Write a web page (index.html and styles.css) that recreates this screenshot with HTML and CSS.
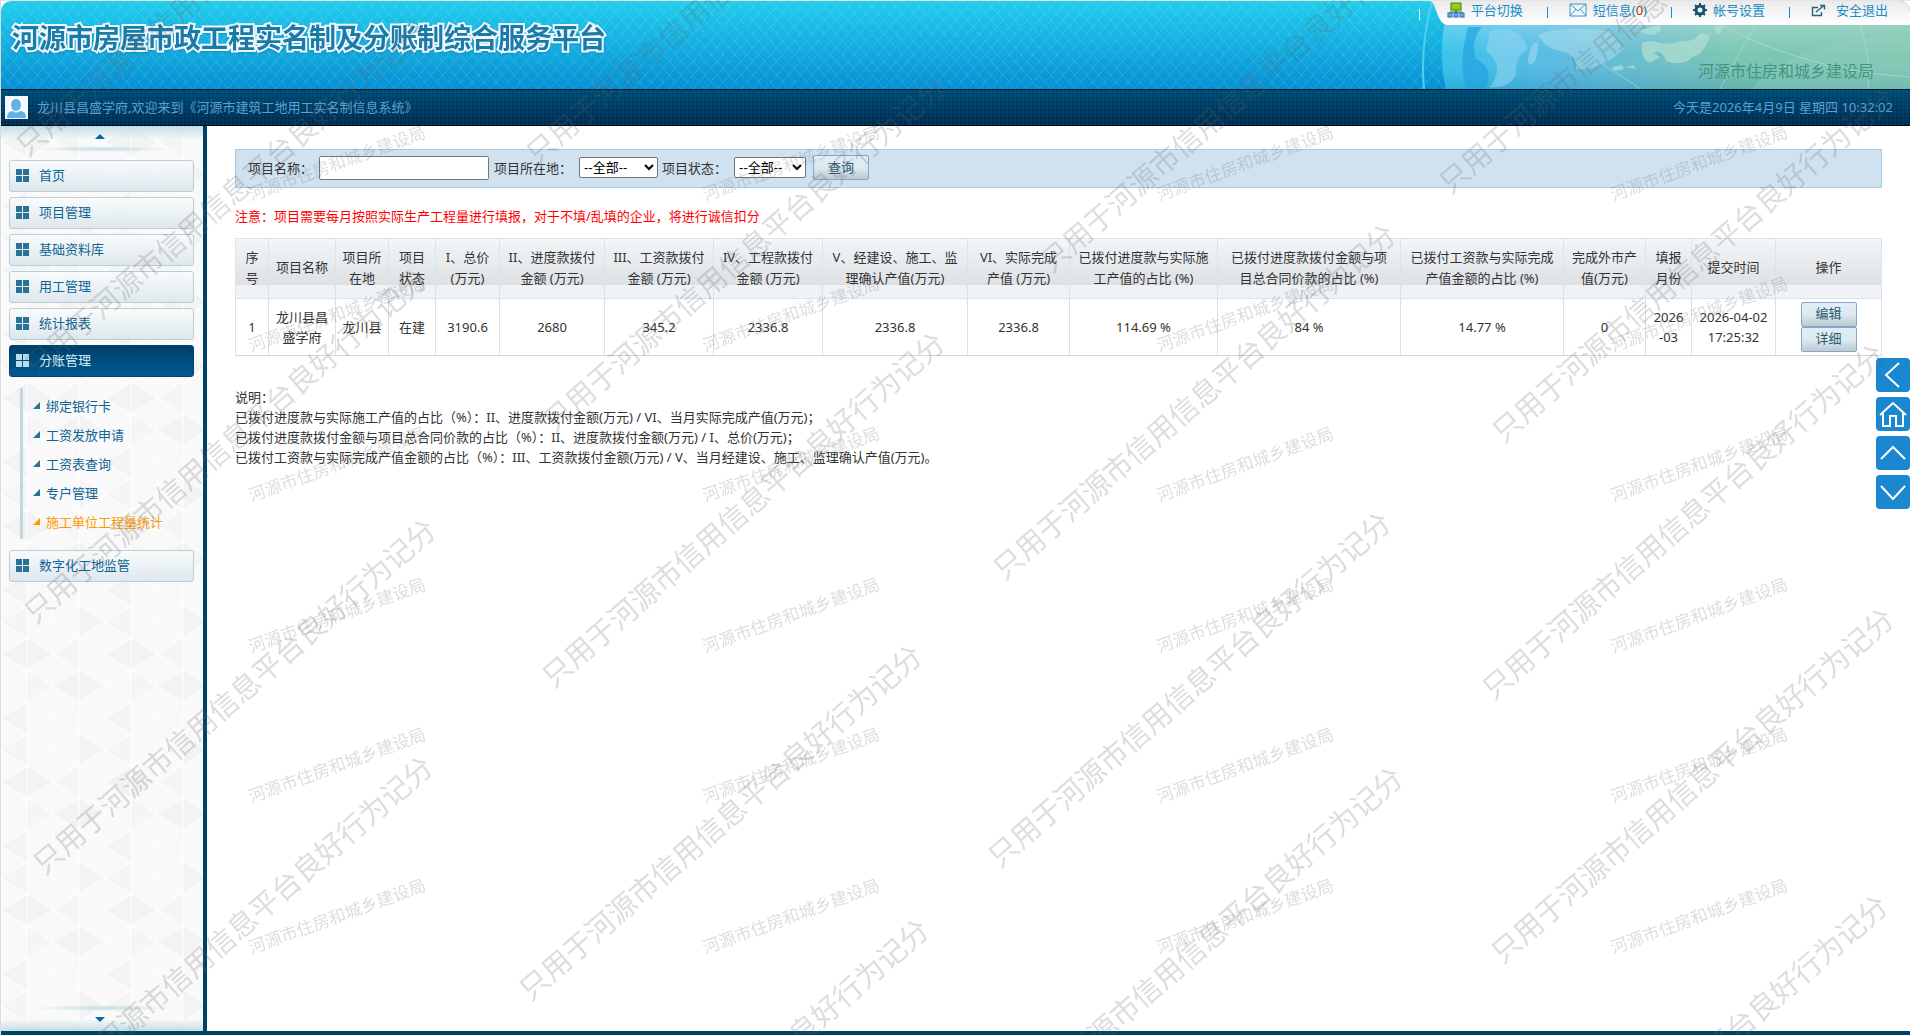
FILE: index.html
```html
<!DOCTYPE html>
<html lang="zh-CN">
<head>
    <meta charset="UTF-8">
    <meta name="viewport" content="width=device-width, initial-scale=1.0">
    <title>河源市房屋市政工程实名制及分账制综合服务平台</title>
    <link rel="stylesheet" href="styles.css">
</head>
<body>
    <header class="header">
        <svg class="globe" width="500" height="88" viewBox="0 0 500 88" aria-hidden="true">
            <defs>
                <linearGradient id="sea" x1="0" x2="1" y1="0" y2="0">
                    <stop offset="0" stop-color="#2fc0ea"/>
                    <stop offset="0.25" stop-color="#54b8e2"/>
                    <stop offset="0.45" stop-color="#66bcc8"/>
                    <stop offset="0.62" stop-color="#74c4b0"/>
                    <stop offset="1" stop-color="#76c2ac"/>
                </linearGradient>
                <linearGradient id="shine" x1="0" x2="0" y1="0" y2="1">
                    <stop offset="0.2" stop-color="#fff" stop-opacity="0.3"/>
                    <stop offset="0.6" stop-color="#fff" stop-opacity="0.05"/>
                    <stop offset="1" stop-color="#0060a0" stop-opacity="0.18"/>
                </linearGradient>
            </defs>
            <path d="M40 0Q26 44 36 88H500V0Z" fill="url(#sea)"/>
            <path d="M40 0Q26 44 36 88H500V0Z" fill="url(#shine)"/>
            <path d="M22 0Q10 46 14 88" fill="none" stroke="#4fd0f0" stroke-width="2"/>
            <path d="M58 26Q48 60 56 88H76Q84 66 66 58Q60 40 72 26Z" fill="#1a9fe0" opacity="0.6"/>
            <path d="M80 30Q110 22 118 48Q104 56 106 74Q98 88 80 86Q96 64 76 50Z" fill="#8fd4f0" opacity="0.6"/>
            <path d="M120 50Q122 40 128 42Q128 62 120 64Q116 62 120 50ZM128 34Q150 24 200 30L214 48Q190 70 166 68Q168 54 150 50Q136 48 128 34Z" fill="#b4e2f0" opacity="0.45"/>
            <path d="M226 30L250 24Q254 32 240 34ZM232 42Q240 38 250 42Q262 44 270 40Q284 42 290 32L300 34Q294 54 282 56Q274 66 256 60Q252 48 244 52L250 56L240 62Q230 58 232 42ZM202 66L212 64L214 68L204 70ZM216 66L224 64L226 68ZM304 26L316 24L308 34Z" fill="#b4e0d2" opacity="0.7"/>
            <path d="M340 88Q400 30 500 36V88Z" fill="#9fd8c4" opacity="0.25"/>
            <path d="M190 62Q220 80 230 88M345 24L310 88M310 24Q400 70 500 76M450 24Q462 56 458 88" fill="none" stroke="#c0e8e0" stroke-opacity="0.5"/>
        </svg>
        <h1 class="title">河源市房屋市政工程实名制及分账制综合服务平台</h1>
        <div class="header-right">
            <nav class="topnav">
                <a href="#">
                    <svg width="18" height="16" viewBox="0 0 18 16">
                        <rect x="4" y="1" width="10" height="7" fill="#8fcf1a" stroke="#4a7a10"/>
                        <path d="M9 8V11M3 12V10H15V12M9 10V12" fill="none" stroke="#456"/>
                        <rect x="1" y="11" width="4" height="4" fill="#6ab4ea" stroke="#2a6ea8"/>
                        <rect x="7" y="11" width="4" height="4" fill="#6ab4ea" stroke="#2a6ea8"/>
                        <rect x="13" y="11" width="4" height="4" fill="#6ab4ea" stroke="#2a6ea8"/>
                    </svg>
                    平台切换
                </a>
                <a href="#">
                    <svg width="18" height="14" viewBox="0 0 18 14">
                        <path d="M1 1H17V13H1ZM1 1L9 8L17 1M1 13L7 6M17 13L11 6" fill="#f4fafd" stroke="#3a96c8"/>
                    </svg>
                    <span>短信息(<b class="count">0</b>)</span>
                </a>
                <a href="#">
                    <svg class="gear" width="14" height="14" viewBox="0 0 14 14">
                        <circle cx="7" cy="7" r="4" fill="none" stroke="#16506e" stroke-width="3"/>
                        <path d="M7 0V3M7 11V14M0 7H3M11 7H14M2 2L4 4M10 10L12 12M2 12L4 10M10 4L12 2" stroke="#16506e" stroke-width="2"/>
                    </svg>
                    帐号设置
                </a>
                <a href="#">
                    <svg class="exit" width="15" height="13" viewBox="0 0 15 13">
                        <path d="M7 3.5H1.5V11.5H10.5V8M5 8L13 1.5M9 1.5H13.5V5.5" fill="none" stroke="#2a5f80" stroke-width="1.4"/>
                    </svg>
                    安全退出
                </a>
            </nav>
            <p class="bureau">河源市住房和城乡建设局</p>
        </div>
    </header>

    <div class="userbar">
        <svg class="avatar" width="23" height="23" viewBox="0 0 23 23">
            <rect width="23" height="23" fill="#f4f9fd"/>
            <ellipse cx="11" cy="9" rx="5" ry="6" fill="#62b0e6"/>
            <path d="M2 22Q2 15 8 15Q11 18 15 15Q21 15 21 22Z" fill="#62b0e6"/>
        </svg>
        <span>龙川县昌盛学府,欢迎来到《河源市建筑工地用工实名制信息系统》</span>
        <span class="clock">今天是2026年4月9日 星期四 10:32:02</span>
    </div>

    <div class="main">
        <aside class="sidebar">
            <div class="scroll scroll-up"><i></i></div>
            <ul class="menu">
                <li><a href="#"><i class="grid-icon"></i>首页</a></li>
                <li><a href="#"><i class="grid-icon"></i>项目管理</a></li>
                <li><a href="#"><i class="grid-icon"></i>基础资料库</a></li>
                <li><a href="#"><i class="grid-icon"></i>用工管理</a></li>
                <li><a href="#"><i class="grid-icon"></i>统计报表</a></li>
                <li>
                    <a href="#" class="active"><i class="grid-icon"></i>分账管理</a>
                    <ul class="submenu">
                        <li><a href="#">绑定银行卡</a></li>
                        <li><a href="#">工资发放申请</a></li>
                        <li><a href="#">工资表查询</a></li>
                        <li><a href="#">专户管理</a></li>
                        <li><a href="#" class="current">施工单位工程量统计</a></li>
                    </ul>
                </li>
                <li><a href="#"><i class="grid-icon"></i>数字化工地监管</a></li>
            </ul>
            <div class="scroll scroll-down"><i></i></div>
        </aside>

        <main class="content">
            <form class="search">
                <label for="xmmc">项目名称：</label>
                <input type="text" id="xmmc">
                <label for="szd">项目所在地：</label>
                <select id="szd" class="area">
                    <option>--全部--</option>
                </select>
                <label for="zt">项目状态：</label>
                <select id="zt">
                    <option>--全部--</option>
                </select>
                <button type="button" class="btn">查询</button>
            </form>

            <p class="notice">注意：项目需要每月按照实际生产工程量进行填报，对于不填/乱填的企业，将进行诚信扣分</p>

            <table class="list">
                <colgroup>
                    <col class="w33"><col class="w67"><col class="w53"><col class="w47"><col class="w64">
                    <col class="w105"><col class="w109"><col class="w109"><col class="w145"><col class="w102">
                    <col class="w148"><col class="w183"><col class="w163"><col class="w82"><col class="w46">
                    <col class="w84"><col class="w106">
                </colgroup>
                <thead>
                    <tr>
                        <th>序号</th>
                        <th>项目名称</th>
                        <th>项目所<br>在地</th>
                        <th>项目<br>状态</th>
                        <th>I、总价<br>(万元)</th>
                        <th>II、进度款拨付<br>金额 (万元)</th>
                        <th>III、工资款拨付<br>金额 (万元)</th>
                        <th>IV、工程款拨付<br>金额 (万元)</th>
                        <th>V、经建设、施工、监<br>理确认产值(万元)</th>
                        <th>VI、实际完成<br>产值 (万元)</th>
                        <th>已拨付进度款与实际施<br>工产值的占比 (%)</th>
                        <th>已拨付进度款拨付金额与项<br>目总合同价款的占比 (%)</th>
                        <th>已拨付工资款与实际完成<br>产值金额的占比 (%)</th>
                        <th>完成外市产<br>值(万元)</th>
                        <th>填报<br>月份</th>
                        <th>提交时间</th>
                        <th>操作</th>
                    </tr>
                </thead>
                <tbody>
                    <tr>
                        <td>1</td>
                        <td>龙川县昌<br>盛学府</td>
                        <td>龙川县</td>
                        <td>在建</td>
                        <td>3190.6</td>
                        <td>2680</td>
                        <td>345.2</td>
                        <td>2336.8</td>
                        <td>2336.8</td>
                        <td>2336.8</td>
                        <td>114.69 %</td>
                        <td>84 %</td>
                        <td>14.77 %</td>
                        <td>0</td>
                        <td>2026<br>-03</td>
                        <td>2026-04-02<br>17:25:32</td>
                        <td class="ops">
                            <button type="button" class="btn">编辑</button>
                            <button type="button" class="btn">详细</button>
                        </td>
                    </tr>
                </tbody>
            </table>

            <div class="remark">
                <p>说明：</p>
                <p>已拨付进度款与实际施工产值的占比（%）：II、进度款拨付金额(万元) / VI、当月实际完成产值(万元)；</p>
                <p>已拨付进度款拨付金额与项目总合同价款的占比（%）：II、进度款拨付金额(万元) / I、总价(万元)；</p>
                <p>已拨付工资款与实际完成产值金额的占比（%）：III、工资款拨付金额(万元) / V、当月经建设、施工、监理确认产值(万元)。</p>
            </div>
        </main>
    </div>

    <div class="float-tools">
        <button type="button" aria-label="后退">
            <svg width="34" height="34" viewBox="0 0 34 34"><path d="M23 5L10 17L23 29"/></svg>
        </button>
        <button type="button" aria-label="主页">
            <svg width="34" height="34" viewBox="0 0 34 34"><path d="M4 18L17 6L30 18M7 16V29H14V19H20V29H27V16"/></svg>
        </button>
        <button type="button" aria-label="顶部">
            <svg width="34" height="34" viewBox="0 0 34 34"><path d="M5 23L17 11L29 23"/></svg>
        </button>
        <button type="button" aria-label="底部">
            <svg width="34" height="34" viewBox="0 0 34 34"><path d="M5 11L17 24L29 11"/></svg>
        </button>
    </div>

    <!-- 水印 -->
    <svg class="watermark" id="watermark" aria-hidden="true"></svg>

    <script>
        const svg = document.getElementById('watermark');

        function addMark(text, x, y, angle, cls) {
            const t = document.createElementNS('http://www.w3.org/2000/svg', 'text');
            t.setAttribute('class', cls);
            t.setAttribute('transform', `translate(${x} ${y}) rotate(${angle})`);
            t.textContent = text;
            svg.appendChild(t);
        }

        // 小字水印：按行列平铺
        for (let row = 0; row < 6; row++) {
            for (let col = 0; col < 4; col++) {
                addMark('河源市住房和城乡建设局', 337 + col * 454, 163 + Math.round(row * 150.6), -20, 'mark-small');
            }
        }

        // 大字水印：每条的起点
        const starts = [
            [20, 149], [28, 369], [28, 616], [37, 867], [34, 1104],
            [530, 157], [547, 424], [546, 680], [523, 993], [530, 1267],
            [1044, 265], [997, 572], [992, 860], [1004, 1115],
            [1443, 186], [1496, 435], [1486, 692], [1495, 956], [1489, 1243]
        ];
        starts.forEach(([x, y]) => addMark('只用于河源市信用信息平台良好行为记分', x, y, -41, 'mark-big'));
    </script>
</body>
</html>
```
FILE: styles.css
```css
* {
    box-sizing: border-box;
}

body {
    margin: 0;
    min-height: 100vh;
    display: flex;
    flex-direction: column;
    font-family: "Noto Sans", "Noto Sans CJK SC", sans-serif;
    font-size: 13px;
    line-height: 20px;
    color: #333;
    background-color: #fff;
    border-top: 1px solid #e4e4e4;
    border-left: 1px solid #dcdcdc;
    overflow: hidden;
}

p, ul {
    margin: 0;
    padding: 0;
    list-style: none;
}

a {
    text-decoration: none;
}

button {
    font-family: inherit;
    cursor: pointer;
}

/* 顶部 */
.header {
    position: relative;
    height: 88px;
    display: flex;
    justify-content: space-between;
    border-radius: 10px 10px 0 0;
    overflow: hidden;
    background:
        repeating-linear-gradient(49deg, rgba(255, 255, 255, 0.09) 0 1px, transparent 1px 9px),
        repeating-linear-gradient(-49deg, rgba(255, 255, 255, 0.09) 0 1px, transparent 1px 9px),
        linear-gradient(#22cdec, #0690d4);
}

.globe {
    position: absolute;
    right: 0;
    top: 0;
}

.title {
    margin: 0;
    padding: 17px 0 0 11px;
    font-size: 27px;
    line-height: 40px;
    font-weight: bold;
    color: #1b7ba8;
    -webkit-text-stroke: 4px #eef8fc;
    paint-order: stroke fill;
    filter: drop-shadow(0 1px 1px rgba(0, 80, 130, 0.3));
}

.header-right {
    position: relative;
    display: flex;
    flex-direction: column;
    align-items: flex-end;
}

.topnav {
    display: flex;
    align-items: center;
    height: 24px;
    padding: 0 22px 6px 22px;
    border-radius: 0 10px 0 0;
    background: linear-gradient(#eaeaea, #fff);
    clip-path: path("M5 0C13 2 11 24 24 24H600V0Z");
}

/* 导航左侧的白色分隔线 */
.header-right::before {
    content: "";
    position: absolute;
    left: -6px;
    top: 8px;
    width: 1px;
    height: 11px;
    background-color: #fff;
}

.topnav a {
    display: flex;
    align-items: center;
    gap: 6px;
    color: #1a8cc8;
}

.topnav a + a::before {
    content: "";
    width: 1px;
    height: 11px;
    margin: 4px 15px 0 24px;
    background-color: #1a8cc8;
}

.topnav .exit {
    margin-right: 4px;
}

.count {
    font-weight: normal;
    color: #a63c00;
}

.bureau {
    padding: 36px 36px 0 0;
    font-size: 16px;
    line-height: 20px;
    color: #459480;
}

.userbar {
    display: flex;
    align-items: center;
    gap: 9px;
    height: 37px;
    padding: 0 17px 1px 4px;
    color: #5c9fd2;
    border-top: 1px solid #001a2c;
    border-bottom: 1px solid #000c18;
    background:
        radial-gradient(rgba(0, 150, 190, 0.16) 1px, transparent 1px) 0 0 / 4px 4px,
        linear-gradient(#004a72, #002b50);
}

.clock {
    margin-left: auto;
}

/* 左侧菜单 */
.main {
    flex: 1;
    display: flex;
    border-bottom: 4px solid #004266;
}

.sidebar {
    width: 206px;
    display: flex;
    flex-direction: column;
    border-right: 4px solid #004266;
    background:
        linear-gradient(#c4dde6, transparent 14px),
        linear-gradient(to top, #c4dde6, transparent 12px),
        url("data:image/svg+xml,%3Csvg xmlns='http://www.w3.org/2000/svg' width='104' height='128'%3E%3Crect width='104' height='128' fill='%23f9f9f9'/%3E%3Cpath d='M26 0L52 16L26 32L0 16ZM52 48L78 32L104 48L78 64ZM26 64V96L0 80ZM78 96L104 112L78 128Z' fill='%23f3f3f3'/%3E%3Cpath d='M52 16L78 32V0ZM0 112L26 96V128ZM26 32V64L52 48Z' fill='%23f5f5f5'/%3E%3Cpath d='M0 0V128M26 0V128M52 0V128M78 0V128M0 16L26 0L104 48M0 16L104 80M0 48L104 112M0 80L78 128M0 112L26 128M26 0L0 16M78 0L0 48M104 16L0 80M104 48L0 112M104 80L26 128M104 112L78 128M78 0L104 16' fill='none' stroke='%23fff' stroke-width='1'/%3E%3C/svg%3E");
}

.scroll {
    display: flex;
    justify-content: center;
    height: 34px;
    padding-top: 8px;
    background: radial-gradient(closest-side, #c4dbe4, transparent) center 20px / 140px 6px no-repeat;
}

.scroll i {
    width: 10px;
    height: 5px;
    margin-right: 4px;
    background-color: #0a66a6;
    clip-path: polygon(50% 0, 100% 100%, 0 100%);
}

.scroll-down {
    height: 26px;
    padding-top: 12px;
    margin-top: auto;
    background-position: center 0;
}

.scroll-down i {
    clip-path: polygon(0 0, 100% 0, 50% 100%);
}

.menu {
    display: flex;
    flex-direction: column;
    gap: 5px;
    padding: 0 9px 0 8px;
}

.menu > li > a {
    display: flex;
    align-items: center;
    gap: 10px;
    height: 32px;
    padding: 0 0 2px 6px;
    border: 1px solid #bccdd6;
    border-radius: 3px;
    color: #0f6496;
    background: linear-gradient(rgba(250, 252, 252, 0.8), rgba(218, 230, 236, 0.9));
}

.menu > li > a.active {
    color: #d8ecf8;
    border-color: #00436c;
    background: linear-gradient(#00406a, #00598f);
}

.grid-icon {
    width: 13px;
    height: 13px;
    color: #2a7196;
    background:
        linear-gradient(currentColor, currentColor) 0 0 / 6px 6px no-repeat,
        linear-gradient(currentColor, currentColor) 7px 0 / 6px 6px no-repeat,
        linear-gradient(currentColor, currentColor) 0 7px / 6px 6px no-repeat,
        linear-gradient(currentColor, currentColor) 7px 7px / 6px 6px no-repeat;
}

.active .grid-icon {
    color: #bcdcee;
}

.submenu {
    margin: 11px 0 6px 11px;
    padding: 3px 0 3px 10px;
    border-left: 3px solid #c0d8e2;
}

.submenu a {
    display: flex;
    align-items: center;
    gap: 6px;
    height: 29px;
    color: #0f6496;
}

.submenu a::before {
    content: "";
    width: 7px;
    height: 7px;
    background-color: #2a7196;
    clip-path: polygon(100% 0, 100% 100%, 0 100%);
}

.submenu a.current {
    color: #ff9900;
}

.submenu a.current::before {
    background-color: #ff9900;
}

/* 内容区 */
.content {
    flex: 1;
    min-width: 0;
    padding: 23px 28px 20px 28px;
}

.search {
    display: flex;
    align-items: center;
    height: 39px;
    padding: 0 12px 2px;
    border: 1px solid #a9cbe2;
    background-color: #d0e2f0;
}

.search input {
    width: 170px;
    height: 24px;
    margin: 0 5px 0 6px;
    border: 1px solid #767676;
    border-radius: 2px;
}

.search select {
    width: 72px;
    height: 21px;
    margin: 0 7px 0 7px;
    font-family: "Liberation Sans", "Noto Sans CJK SC", sans-serif;
    font-size: 13px;
    border: 1px solid #767676;
    border-radius: 2px;
    background-color: #fff;
    color: #000;
}

.search .area {
    width: 79px;
    margin-right: 4px;
}

.btn {
    width: 56px;
    height: 25px;
    padding: 0 0 2px;
    font-size: 13px;
    line-height: 20px;
    color: #2b5a70;
    border: 1px solid #86a6c8;
    border-radius: 2px;
    background: linear-gradient(#e2eef7, #dde9f0 50%, #bccad2);
}

.notice {
    margin: 18px 0 12px;
    color: #f00;
}

.list {
    width: 100%;
    table-layout: fixed;
    border-collapse: collapse;
    text-align: center;
}

.list th {
    height: 60px;
    padding: 0 0 2px;
    font-weight: normal;
    line-height: 21px;
    border: 1px solid #dce3e9;
}

.list th:first-child {
    padding: 0 6px 2px;
}

.list thead tr {
    background: linear-gradient(#f3f6f9, #dde1e4) 0 0 / 100% 46px no-repeat #eff3f7;
}

.list td {
    height: 57px;
    padding: 0 0 1px;
    border: 1px solid #dce0e6;
    border-bottom-color: #d4d8dc;
}

.list .ops .btn {
    display: block;
    margin: 0 auto;
}

.w33 { width: 33px; }
.w46 { width: 46px; }
.w47 { width: 47px; }
.w53 { width: 53px; }
.w64 { width: 64px; }
.w67 { width: 67px; }
.w82 { width: 82px; }
.w84 { width: 84px; }
.w102 { width: 102px; }
.w105 { width: 105px; }
.w106 { width: 106px; }
.w109 { width: 109px; }
.w145 { width: 145px; }
.w148 { width: 148px; }
.w163 { width: 163px; }
.w183 { width: 183px; }

.remark {
    margin-top: 31px;
}

/* 右侧悬浮按钮 */
.float-tools {
    position: fixed;
    right: 0;
    top: 358px;
    display: flex;
    flex-direction: column;
    gap: 5px;
}

.float-tools button {
    width: 34px;
    height: 34px;
    padding: 0;
    border: none;
    border-radius: 4px;
    background-color: #1a87d0;
}

.float-tools svg {
    display: block;
    fill: none;
    stroke: #fff;
    stroke-width: 2;
}

.watermark {
    position: fixed;
    top: 0;
    left: 0;
    width: 100%;
    height: 100%;
    pointer-events: none;
    fill: rgba(100, 100, 100, 0.22);
}

.mark-small {
    font-size: 17px;
    text-anchor: middle;
    dominant-baseline: central;
}

.mark-big {
    font-size: 29px;
    dominant-baseline: central;
}
```
